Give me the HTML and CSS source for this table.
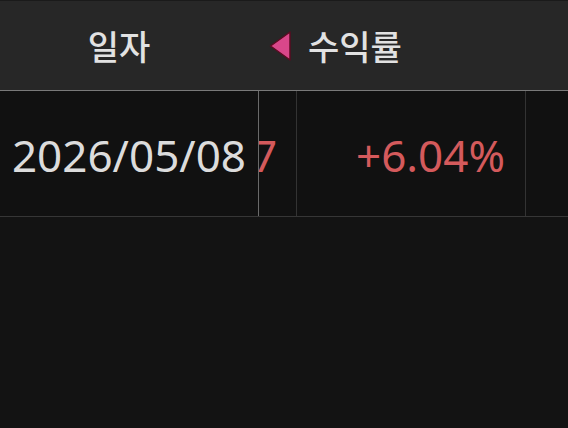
FILE: index.html
```html
<!DOCTYPE html>
<html lang="ko">
<head>
<meta charset="utf-8">
<link rel="stylesheet" href="styles.css">
</head>
<body>
<div class="page">
  <div class="head">
    <div class="h-date">일자</div>
    <svg class="arrow" width="24" height="32" viewBox="0 0 24 32">
      <polygon points="1.5,16 21,2 21,30" fill="#d9478a" stroke="#5a0c22" stroke-width="1.5" stroke-linejoin="round"/>
    </svg>
    <div class="h-rate">수익률</div>
  </div>
  <div class="row">
    <div class="c-date">2026/05/08</div>
    <div class="c-clip"><span class="clip-txt">7</span></div>
    <div class="c-rate">+6.04%</div>
    <div class="c-rest"></div>
  </div>
</div>
</body>
</html>
```
FILE: styles.css
```css
html, body {
  margin: 0;
  padding: 0;
  background: #131313;
}
.page {
  width: 568px;
  height: 428px;
  background: #131313;
  font-family: "Noto Sans", "Noto Sans CJK KR", sans-serif;
}
.head {
  height: 89px;
  background: #272727;
  border-top: 1px solid #1a1a1a;
  border-bottom: 1px solid #7a7a7a;
  display: flex;
  align-items: center;
  box-sizing: content-box;
}
.h-date {
  width: 238px;
  text-align: center;
  font-family: "Noto Sans CJK KR", sans-serif;
  font-weight: 500;
  font-size: 34px;
  color: #e2e2e2;
  padding-top: 0;
}
.arrow {
  margin-left: 31px;
  display: block;
}
.h-rate {
  margin-left: 15px;
  font-family: "Noto Sans CJK KR", sans-serif;
  font-weight: 500;
  font-size: 34px;
  color: #e2e2e2;
}
.row {
  height: 125px;
  background: #111111;
  border-bottom: 1px solid #363636;
  display: flex;
}
.c-date {
  width: 258px;
  display: flex;
  align-items: center;
  justify-content: center;
  font-size: 44px;
  color: #dcdcdc;
  padding-top: 2px;
  box-sizing: border-box;
}
.c-clip {
  width: 37px;
  border-left: 1px solid #6a6a6a;
  border-right: 1px solid #333333;
  overflow: hidden;
  display: flex;
  align-items: center;
  padding-top: 2px;
}
.clip-txt {
  font-size: 44px;
  color: #d45a5c;
  margin-left: -7px;
}
.c-rate {
  width: 229px;
  border-right: 1px solid #333333;
  display: flex;
  align-items: center;
  justify-content: flex-end;
  padding-right: 20px;
  padding-top: 2px;
  box-sizing: border-box;
  font-size: 44px;
  color: #d45a5c;
}
.c-rest {
  flex: 1;
}
```
